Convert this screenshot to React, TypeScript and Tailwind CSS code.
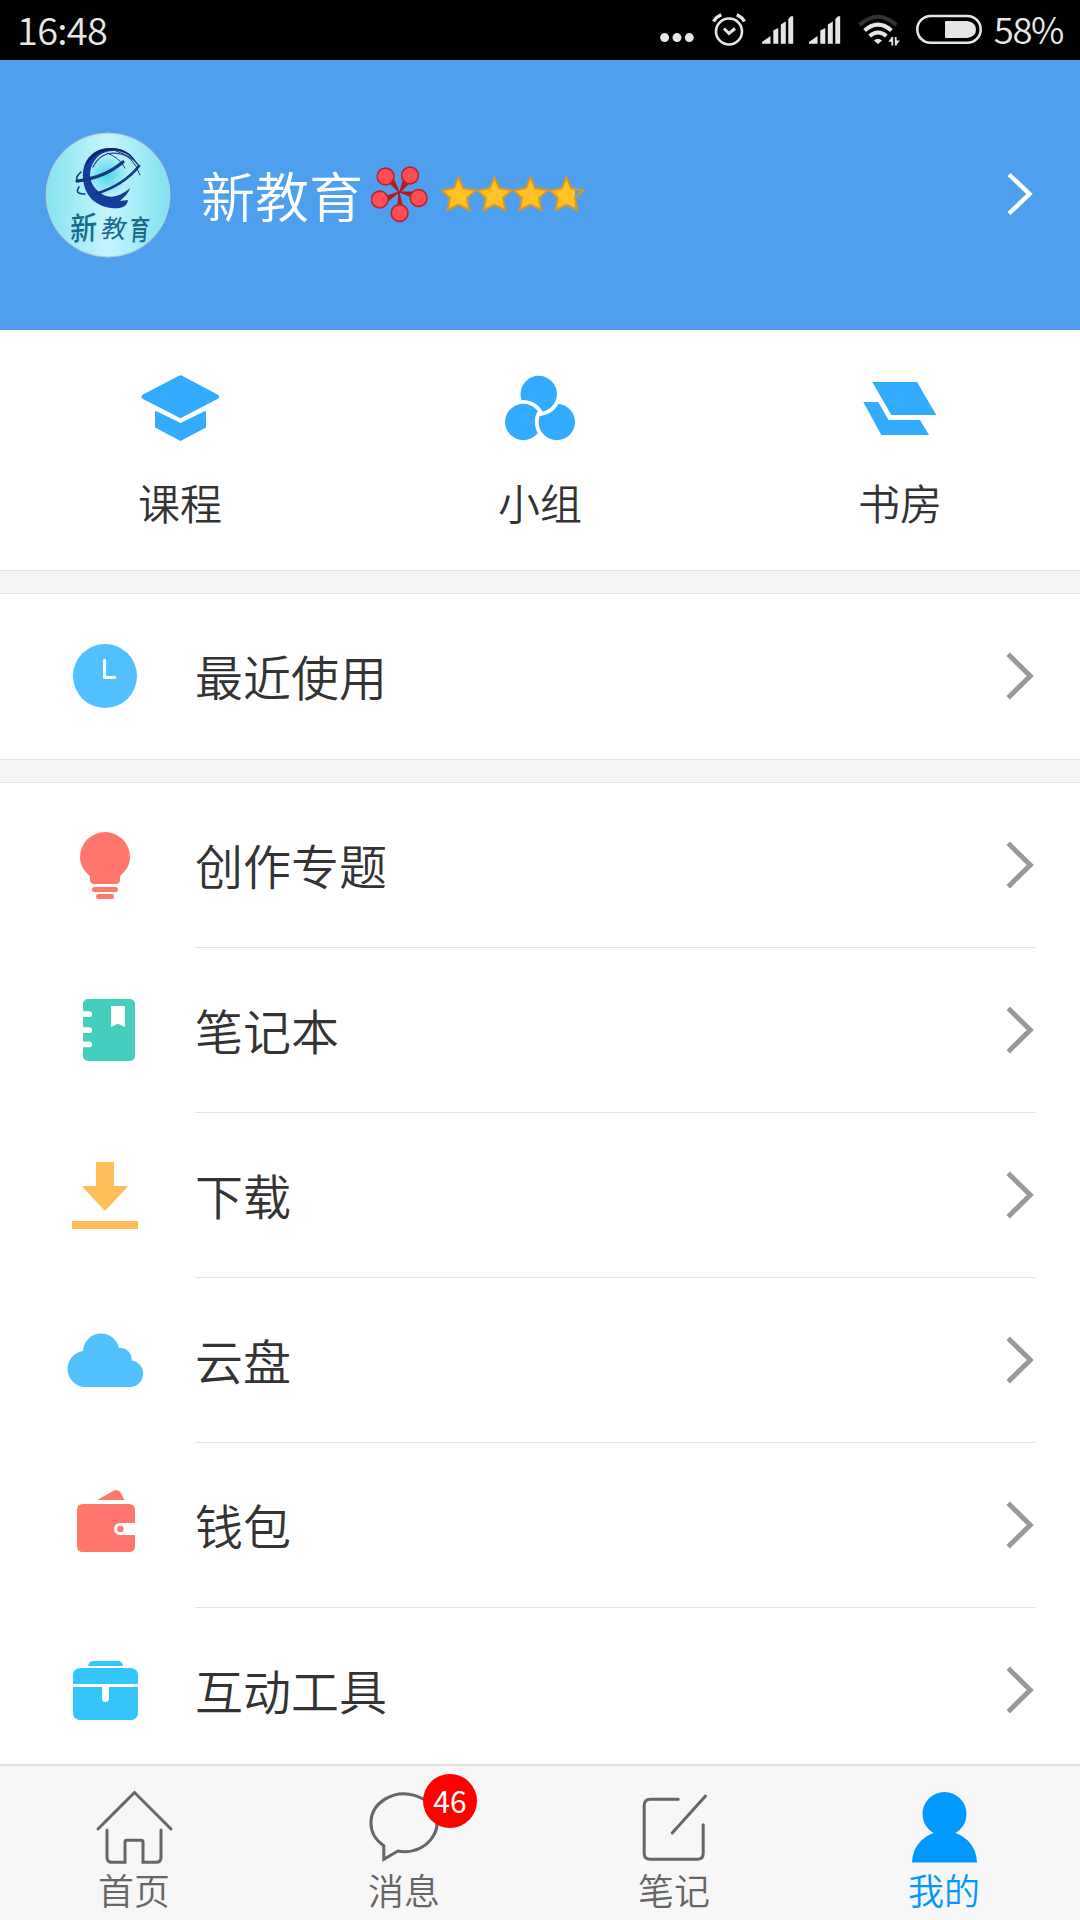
import type { ReactNode } from 'react';

interface MenuItem {
  label: string;
  icon: ReactNode;
}

function StatusBar() {
  return (
    <header className="flex h-[60px] shrink-0 items-center bg-black pr-[17px] pl-[17px] text-[37px] leading-none text-[#e6e6e6]">
      <span className="flex-1 pb-[2px] text-[38px] font-[350] tracking-[-0.7px]">16:48</span>
      <svg className="mr-[18px] h-[60px] w-[34px]" viewBox="0 0 34 60" fill="#e6e6e6">
        <circle cx="4.6" cy="37.6" r="4.5" />
        <circle cx="17" cy="37.6" r="4.5" />
        <circle cx="29.3" cy="37.6" r="4.5" />
      </svg>
      {/* Alarm */}
      <svg className="mr-4 h-[60px] w-[34px]" viewBox="0 0 34 60" fill="none" stroke="#e6e6e6" strokeWidth="2.6">
        <circle cx="17" cy="31.5" r="13" />
        <path d="M12 28.5L17 33.5L23 28.5" strokeWidth="3" />
        <path d="M1.6 21.5Q4 17 9.3 14.8M24.7 14.8Q30 17 32.4 21.5" strokeWidth="3.4" />
      </svg>
      {[0, 1].map((sim) => (
        <svg key={sim} className="mr-[15px] h-[60px] w-8" viewBox="0 0 32 60" fill="#e6e6e6">
          <path d="M0 43.8V42L8.5 36V43.8ZM11.3 43.8V30.5L16.3 28V43.8ZM18.8 43.8V24.5L23.8 21.5V43.8ZM26.3 43.8V19L29 16.3H31.2V43.8Z" />
        </svg>
      ))}
      {/* Wi-Fi */}
      <svg className="mr-[16px] ml-[2px] h-[60px] w-[42px]" viewBox="0 0 42 60" fill="none" stroke="#e6e6e6" strokeWidth="4">
        <path d="M1.6 25Q20 8.5 38.4 25" stroke="#333" />
        <path d="M6.6 30.5Q20 18.8 33.4 30.5" />
        <path d="M11.6 36Q20 29 28.4 36" />
        <path d="M16.5 40.5Q20 38 23.5 40.5L20 43.5Z" fill="#e6e6e6" strokeWidth="1" />
        <path d="M34.3 37V45.5M37.7 37V45.5" strokeWidth="1.8" />
        <path d="M34 37L30.2 41.8H34ZM38 45.5L41.8 40.5H38Z" fill="#e6e6e6" stroke="none" />
      </svg>
      {/* Battery */}
      <svg className="mr-[12px] h-[60px] w-[66px]" viewBox="0 0 66 60">
        <rect x="1.3" y="16" width="63.4" height="26.8" rx="13.4" fill="none" stroke="#e6e6e6" strokeWidth="2.6" />
        <path d="M30 21H51Q60 22 60 29.5Q60 37 51 38H30Q29 38 29 37V22Q29 21 30 21Z" fill="#e6e6e6" />
      </svg>
      <span className="pb-[2px] text-[36.5px] font-[350] tracking-[-1.4px]">58%</span>
    </header>
  );
}

function Avatar() {
  return (
    <svg className="size-[126px]" viewBox="0 0 126 126">
      <defs>
        <linearGradient id="avatarBg">
          <stop offset="0" stopColor="#86e4f0" />
          <stop offset="0.5" stopColor="#c6f4fc" />
          <stop offset="1" stopColor="#80e2f0" />
        </linearGradient>
        <radialGradient id="globe">
          <stop offset="0" stopColor="#4ad4ec" />
          <stop offset="1" stopColor="#b4f0fa" />
        </radialGradient>
      </defs>
      <circle cx="63" cy="63" r="62" fill="url(#avatarBg)" stroke="#c3c9cd" strokeWidth="1" />
      <ellipse cx="62" cy="43" rx="21" ry="20" fill="url(#globe)" />
      {/* Brush-stroke "e" */}
      <path
        d="M94 35C88 21 77 16 66 16C47 16 37 29 38 46C39 63 50 74 66 76C76 77 82 75 83 68L75 69C79 65 84 61 85 56C77 63 66 68 57 62C47 56 43 46 46 36C50 23 60 18 71 19C82 20 89 26 94 35Z"
        fill="#163d9c"
      />
      <path d="M94 35C88 21 77 16 66 16C51 16 42 25 39 37C45 25 55 18 68 18C80 18 88 25 94 35Z" fill="#0d2167" />
      <g fill="none" stroke="#163783" strokeLinecap="round">
        <path d="M32 49Q59 46 78 30" strokeWidth="3.2" />
        <path d="M50 62Q78 54 94 34" strokeWidth="2.8" />
        <path d="M36 40Q29 46 33 50M34 55Q29 62 40 62" strokeWidth="1.6" />
        <path d="M62 21Q74 25 80 36M71 19Q88 23 95 43" strokeWidth="1" />
        <path d="M48 35Q55 21 69 21Q86 22 94 34" strokeWidth="1.2" />
      </g>
      <g fill="#176a8b" fontFamily="'Noto Sans CJK SC', sans-serif">
        <text fontSize="27" fontWeight="500" transform="translate(25 109) rotate(-5) skewX(-6) scale(1 1.18)">
          新
        </text>
        <text fontSize="25" fontWeight="400" transform="translate(55 105) rotate(3) skewX(-8)">
          教
        </text>
        <text fontSize="20" fontWeight="500" transform="translate(84 108) skewX(-4) scale(1 1.4)">
          育
        </text>
      </g>
    </svg>
  );
}

const starPath = 'M17.5 1.5L22.3 12.3L34.5 14.5L25.8 22L28.3 34L17.5 28.7L6.7 34L9 22L1 14.5L12.7 12.3Z';

function ProfileHeader() {
  return (
    <section className="flex h-[270px] shrink-0 items-center bg-[#4e9fee] pr-[46px] pl-[45px]">
      <Avatar />
      <h1 className="ml-[30px] text-[54px] leading-none font-[350] whitespace-nowrap text-white">新教育</h1>
      {/* Flower badge */}
      <svg className="mb-[2px] ml-2 h-[58px] w-[58px]" viewBox="0 0 58 58" fill="#ff4f54" stroke="#b9232b" strokeWidth="1.6">
        <path
          d="M28 27L19 18L23 15ZM29 27L32 16L37 19ZM29 27L41 27L40 32ZM28 27L27 40L31 40ZM28 27L16 31L18 35Z"
          fill="#b51c22"
          stroke="#b51c22"
          strokeWidth="1.2"
        />
        <circle cx="14.6" cy="11.5" r="8.4" />
        <circle cx="39" cy="10.5" r="8.4" />
        <circle cx="47.6" cy="33" r="8.4" />
        <circle cx="28.6" cy="48" r="8.4" />
        <circle cx="8.8" cy="34.5" r="8.4" />
      </svg>
      <div className="mb-[2px] ml-3 flex flex-1">
        {[0, 1, 2].map((i) => (
          <svg key={i} className="h-9 w-9" viewBox="0 0 36 36">
            <path d={starPath} fill="#ffc327" stroke="#df981b" strokeWidth="2" />
          </svg>
        ))}
        <svg className="h-9 w-9" viewBox="0 0 36 36">
          <clipPath id="partStar">
            <path d="M0 0H26V36H0Z" />
          </clipPath>
          <path d={starPath} fill="#ffc327" clipPath="url(#partStar)" />
          <path d={starPath} fill="none" stroke="#df981b" strokeWidth="2" />
        </svg>
      </div>
      <svg className="mb-[2px] h-[44px] w-[27px]" viewBox="0 0 27 44" fill="none" stroke="#fff" strokeWidth="4.4">
        <path d="M2 2.5L22.5 22L2 41.5" />
      </svg>
    </section>
  );
}

const shortcuts: MenuItem[] = [
  {
    label: '课程',
    icon: (
      <>
        <path d="M38 6.2Q40.5 4.4 43 6.2L77.5 24.5Q81 26.8 77.5 29L40.5 48.3L3 29Q-0.5 26.8 3 24.5Z" />
        <path d="M15 42Q15 40.5 16.5 41.3L40.5 53L64.5 41.3Q66 40.5 66 42V57.5L40.5 71L15 57.5Z" />
      </>
    ),
  },
  {
    label: '小组',
    icon: (
      <>
        {/* each circle is notched by its neighbour */}
        <mask id="cutLeft" maskUnits="userSpaceOnUse" x="0" y="0" width="80" height="80">
          <path d="M0 0H80V80H0Z" fill="#fff" />
          <circle cx="23.3" cy="52" r="22" fill="#000" />
        </mask>
        <mask id="cutRight" maskUnits="userSpaceOnUse" x="0" y="0" width="80" height="80">
          <path d="M0 0H80V80H0Z" fill="#fff" />
          <circle cx="56.8" cy="52" r="22" fill="#000" />
        </mask>
        <mask id="cutTop" maskUnits="userSpaceOnUse" x="0" y="0" width="80" height="80">
          <path d="M0 0H80V80H0Z" fill="#fff" />
          <circle cx="38.7" cy="24" r="22" fill="#000" />
        </mask>
        <circle cx="38.7" cy="24" r="18.2" mask="url(#cutLeft)" />
        <circle cx="23.3" cy="52" r="18.2" mask="url(#cutRight)" />
        <circle cx="56.8" cy="52" r="18.2" mask="url(#cutTop)" />
      </>
    ),
  },
  {
    label: '书房',
    icon: <path d="M12.3 12H57L76.3 45H31.3ZM3.3 32H18.3L28.5 50H60L69 65H21.3Z" />,
  },
];

function Shortcuts() {
  return (
    <nav className="grid h-60 shrink-0 grid-cols-3">
      {shortcuts.map((s) => (
        <div key={s.label} className="flex flex-col items-center pt-10">
          <svg className="h-20 w-20" viewBox="0 0 80 80" fill="#33abff">
            {s.icon}
          </svg>
          <span className="mt-[30px] text-[42px] leading-[44px] font-[350] text-[#333]">{s.label}</span>
        </div>
      ))}
    </nav>
  );
}

const recent: MenuItem = {
  label: '最近使用',
  icon: (
    <>
      <circle cx="42" cy="42" r="32" fill="#52c0ff" />
      <path d="M41.6 26.3V43.5H51.8" fill="none" stroke="#fff" strokeWidth="3" strokeLinecap="round" strokeLinejoin="round" />
    </>
  ),
};

const menu: MenuItem[] = [
  {
    label: '创作专题',
    icon: (
      <g fill="#ff776c">
        <path d="M42 9A25 25 0 0 1 67 34C67 42 63 48 57.5 52.5Q57 53 57 57Q57 61 53 61H31Q27 61 27 57Q27 53 26.5 52.5C21 48 17 42 17 34A25 25 0 0 1 42 9Z" />
        <rect x="29" y="64" width="26" height="5" rx="2.5" />
        <rect x="33" y="71" width="18" height="5" rx="2.5" />
      </g>
    ),
  },
  {
    label: '笔记本',
    icon: (
      <>
        <rect x="20" y="11" width="52" height="62" rx="5" fill="#44cebd" />
        <path d="M48 18H62V39L55 35.7L48 39Z" fill="#fff" />
        <path d="M19 26.2H26.2M19 42.2H26.2M19 56.3H26.2" stroke="#fff" strokeWidth="5.8" strokeLinecap="round" />
      </>
    ),
  },
  {
    label: '下载',
    icon: <path d="M33 9H51V33H63.5Q65.2 33 64 34.5L42 58L20 34.5Q18.8 33 20.5 33H33ZM9 68H75V76H9Z" fill="#ffbe5c" />,
  },
  {
    label: '云盘',
    icon: (
      <path
        d="M22.3 69A18.1 18.1 0 0 1 20 33A18.2 18.2 0 0 1 56 30A11.5 11.5 0 0 1 68.7 42.4A13.4 13.4 0 0 1 68 69Z"
        fill="#52c0ff"
      />
    ),
  },
  {
    label: '钱包',
    icon: (
      <g fill="#ff776c">
        <path d="M34.3 17L50.5 7.8Q55 5.5 57.8 10L61.5 17Z" />
        <path d="M20 21H66Q72 21 72 27V40H57A6 6 0 0 0 57 52H72V63Q72 69 66 69H20Q14 69 14 63V27Q14 21 20 21Z" />
        <circle cx="57.4" cy="46" r="3.2" />
      </g>
    ),
  },
  {
    label: '互动工具',
    icon: (
      <g fill="#33c5fc">
        <path d="M25 18Q26 13 30 13H55Q59 13 60 18Z" />
        <path d="M17 20H68Q75 21 75 27V36H10V27Q10 21 17 20Z" />
        <path d="M10 39H39V50.5A3.5 3.5 0 0 0 46 50.5V39H75V66Q74 71 69 72H16Q11 71 10 66Z" />
      </g>
    ),
  },
];

function MenuRow({ item, divider }: { item: MenuItem; divider?: boolean }) {
  return (
    <li className="flex h-[165px] shrink-0 pr-[45px] pl-[63px]">
      <svg className="mt-10 mr-12 h-[84px] w-[84px]" viewBox="0 0 84 84">
        {item.icon}
      </svg>
      <div className={`flex flex-1 items-center justify-between border-b ${divider ? 'border-[#e3e3e3]' : 'border-transparent'}`}>
        <span className="pb-[3px] text-[48px] leading-none font-[350] text-[#333]">{item.label}</span>
        <svg className="h-12 w-[30px]" viewBox="0 0 30 48" fill="none" stroke="#999" strokeWidth="5">
          <path d="M3.2 2.3L25.3 24L3.2 45.7" />
        </svg>
      </div>
    </li>
  );
}

function Gap() {
  return <li className="h-6 shrink-0 border-y border-[#e3e4e5] bg-[#f4f5f7]" />;
}

const tabs = [
  {
    label: '首页',
    icon: (
      <path d="M8.5 49L45 12.5L81.5 49M17.5 50V77.5Q17.5 82.3 22.5 82.3H35.5V62Q35.5 60.3 37.5 60.3H51.5Q53.5 60.3 53.5 62V82.3H66.5Q71.5 82.3 71.5 77.5V50" />
    ),
  },
  {
    label: '消息',
    badge: 46,
    icon: <path d="M38.3 71Q41 71.7 44.5 71.7A33 28.9 0 1 0 24.3 65.7V79.3Z" />,
  },
  {
    label: '笔记',
    icon: <path d="M48.7 19.3H20.7Q14.7 19.3 14.7 25.3V73.3Q14.7 79.3 20.7 79.3H67.7Q73.7 79.3 73.7 73.3V44.7M42.7 53L76 16" />,
  },
  {
    label: '我的',
    active: true,
    icon: (
      <g fill="#0099ff" stroke="none">
        <circle cx="45" cy="34" r="22" />
        <path d="M12.5 82.5A32.5 31.5 0 0 1 77.5 82.5Z" />
      </g>
    ),
  },
];

function TabBar() {
  return (
    <nav className="grid h-[156px] shrink-0 grid-cols-4 border-t-2 border-[#e2e2e2] bg-[#f7f7f7]">
      {tabs.map((tab) => (
        <div
          key={tab.label}
          className={`relative flex flex-col items-center pt-[14px] ${tab.active ? 'text-[#0099ff]' : 'text-[#666]'}`}
        >
          <svg className="h-[86px] w-[90px]" viewBox="0.5 0 90 86" fill="none" stroke="#666" strokeWidth="3" strokeLinecap="round">
            {tab.icon}
          </svg>
          {tab.badge && (
            <span className="absolute top-2 left-[153px] flex size-[54px] items-center justify-center rounded-full bg-[#ff0000] pb-[2px] text-[30px] leading-none text-white">
              {tab.badge}
            </span>
          )}
          <span className="mt-[4px] mr-[2px] text-[36px] leading-[38px] font-[350]">{tab.label}</span>
        </div>
      ))}
    </nav>
  );
}

export default function App() {
  return (
    <div className="flex h-[1920px] w-[1080px] flex-col overflow-hidden bg-white font-['Noto_Sans_CJK_SC',sans-serif]">
      <StatusBar />
      <ProfileHeader />
      <Shortcuts />
      <ul className="flex min-h-0 flex-1 flex-col overflow-hidden">
        <Gap />
        <MenuRow item={recent} />
        <Gap />
        {menu.map((item) => (
          <MenuRow key={item.label} item={item} divider />
        ))}
      </ul>
      <TabBar />
    </div>
  );
}
